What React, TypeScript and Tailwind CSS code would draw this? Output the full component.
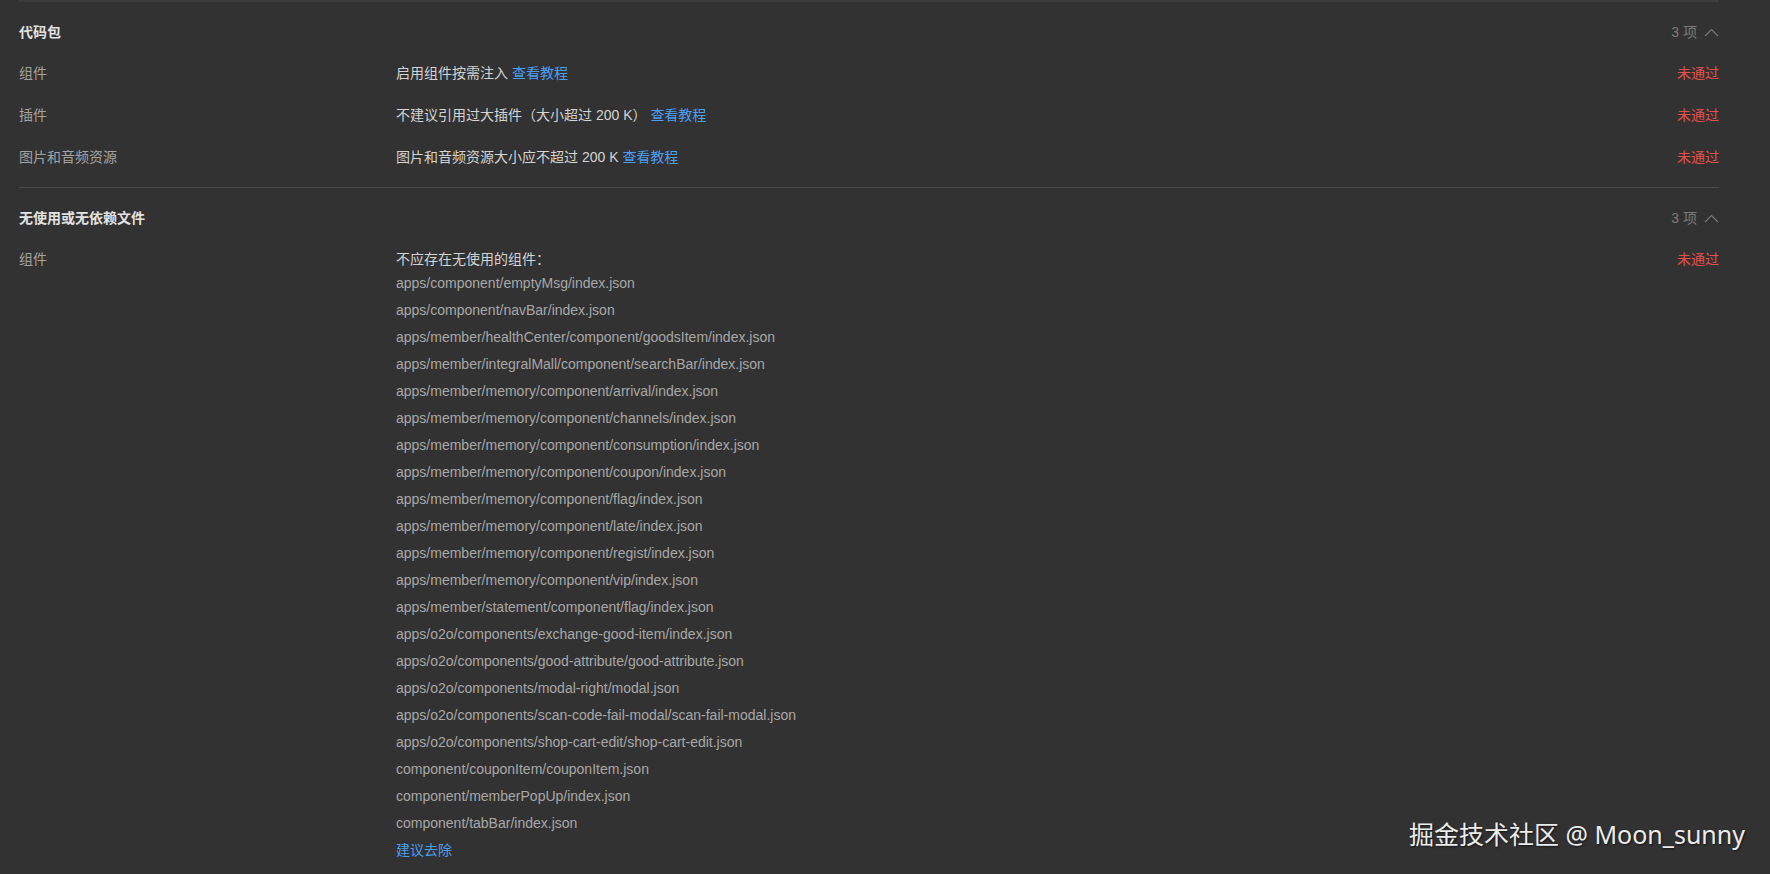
import React from "react";

type Row = {
  label: string;
  text: string;
  link: string;
};

const packageRows: Row[] = [
  { label: "组件", text: "启用组件按需注入", link: "查看教程" },
  { label: "插件", text: "不建议引用过大插件（大小超过 200 K）", link: "查看教程" },
  { label: "图片和音频资源", text: "图片和音频资源大小应不超过 200 K", link: "查看教程" },
];

const unusedFiles = [
  "apps/component/emptyMsg/index.json",
  "apps/component/navBar/index.json",
  "apps/member/healthCenter/component/goodsItem/index.json",
  "apps/member/integralMall/component/searchBar/index.json",
  "apps/member/memory/component/arrival/index.json",
  "apps/member/memory/component/channels/index.json",
  "apps/member/memory/component/consumption/index.json",
  "apps/member/memory/component/coupon/index.json",
  "apps/member/memory/component/flag/index.json",
  "apps/member/memory/component/late/index.json",
  "apps/member/memory/component/regist/index.json",
  "apps/member/memory/component/vip/index.json",
  "apps/member/statement/component/flag/index.json",
  "apps/o2o/components/exchange-good-item/index.json",
  "apps/o2o/components/good-attribute/good-attribute.json",
  "apps/o2o/components/modal-right/modal.json",
  "apps/o2o/components/scan-code-fail-modal/scan-fail-modal.json",
  "apps/o2o/components/shop-cart-edit/shop-cart-edit.json",
  "component/couponItem/couponItem.json",
  "component/memberPopUp/index.json",
  "component/tabBar/index.json",
];

const SectionHeader = ({ title, count }: { title: string; count: number }) => (
  <div className="flex h-5 items-center justify-between">
    <span className="font-bold text-[#e2e2e2]">{title}</span>
    <span className="flex items-center gap-[7px] text-[#7a7a7a]">
      {count} 项
      <svg width="15" height="9" viewBox="0 0 15 9" fill="none">
        <path d="M1 8 L7.5 1.5 L14 8" stroke="#7a7a7a" strokeWidth="1.1" />
      </svg>
    </span>
  </div>
);

const Status = () => <span className="text-[#e5504c]">未通过</span>;

const App = () => {
  return (
    <div
      className="relative h-[874px] w-full overflow-hidden bg-[#323232] text-[14px] leading-[20px]"
      style={{ fontFamily: '"Liberation Sans", "Noto Sans CJK SC", sans-serif' }}
    >
      <div className="mr-[51px] ml-[19px]">
        {/* 代码包 */}
        <section className="border-t-2 border-[#3c3c3c] pt-[20px] pb-[9px]">
          <SectionHeader title="代码包" count={3} />
          <div className="mt-[10px]">
            {packageRows.map((row, index) => (
              <div key={index} className="flex py-[11px]">
                <span className="w-[377px] shrink-0 text-[#a3a3a3]">{row.label}</span>
                <span className="flex-1 text-[#d4d4d4]">
                  {row.text} <span className="text-[#4a9ff5]">{row.link}</span>
                </span>
                <Status />
              </div>
            ))}
          </div>
        </section>

        {/* 无使用或无依赖文件 */}
        <section className="border-t border-[#4a4a4a] pt-[20px]">
          <SectionHeader title="无使用或无依赖文件" count={3} />
          <div className="mt-[10px] flex py-[11px]">
            <span className="w-[377px] shrink-0 text-[#a3a3a3]">组件</span>
            <div className="flex-1">
              <div className="text-[#d4d4d4]">不应存在无使用的组件：</div>
              {unusedFiles.map((file, index) => (
                <div key={index} className="py-[3.5px] text-[#a8a8a8]">
                  {file}
                </div>
              ))}
              <div className="py-[3.5px] text-[#4a9ff5]">建议去除</div>
            </div>
            <Status />
          </div>
        </section>
      </div>

      <div
        className="absolute right-[25px] bottom-[26px] text-[25px] leading-[28px] text-[#ececec]"
        style={{ fontFamily: '"Noto Sans", "Noto Sans CJK SC", sans-serif', textShadow: "1px 1px 2px rgba(0,0,0,0.6)" }}
      >
        掘金技术社区 @ Moon_sunny
      </div>
    </div>
  );
};

export default App;
